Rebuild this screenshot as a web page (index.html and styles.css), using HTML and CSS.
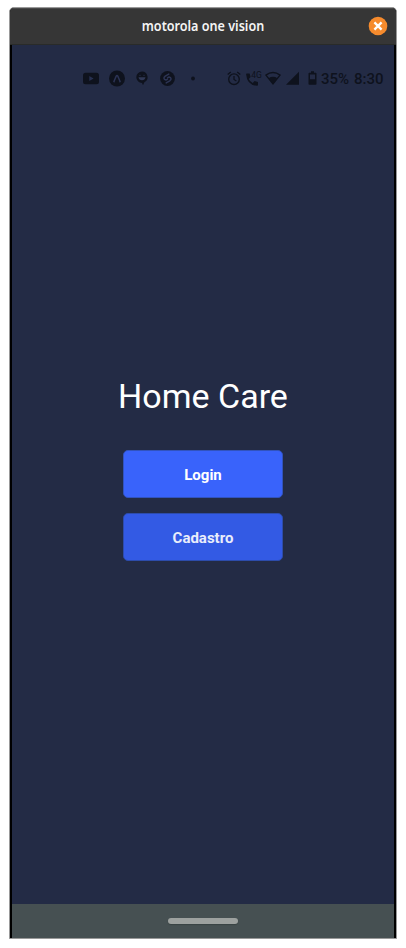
FILE: index.html
```
<!DOCTYPE html>
<html lang="pt-BR">
<head>
<meta charset="utf-8">
<title>motorola one vision</title>
<link rel="stylesheet" href="styles.css">
</head>
<body>
<div class="window">
  <header class="titlebar">
    <span class="title">motorola one vision</span>
    <svg class="close" viewBox="0 0 20 20" role="img" aria-label="Fechar"><circle cx="10" cy="10" r="9.3" fill="#f68b2d"/><path d="M6.4 6.4l7.2 7.2M13.6 6.4l-7.2 7.2" stroke="#fff" stroke-width="2.3"/></svg>
  </header>
  <main class="screen">
    <div class="status">
      <div class="notifications">
        <svg width="16" height="18" viewBox="0 0 16 18"><rect y="2.7" width="16" height="11.5" rx="2.5" fill="currentColor"/><path d="M6.3 6.1l4.3 2.4-4.3 2.4z" fill="#273050"/></svg>
        <svg width="16" height="18" viewBox="0 0 16 18"><circle cx="8" cy="8.5" r="8" fill="currentColor"/><path d="M4.7 12L7.2 6.1q.8-1.2 1.6 0l2.5 5.9M4.9 11.8l.7.4M11.1 11.8l-.7.4" fill="none" stroke="#2b3354" stroke-width="1.5"/></svg>
        <svg width="12" height="18" viewBox="0 0 12 18"><path d="M6 1.5a5.7 5.7 0 0 1 2.4 10.8L7 15.3 6 12.9A5.7 5.7 0 0 1 6 1.5z" fill="currentColor"/><path d="M2.5 7.2h7Q9 10.2 6 10.2T2.5 7.2z" fill="#303855"/><path d="M3 5.6q1-1 2 0M7 5.6q1-1 2 0" fill="none" stroke="#262d48" stroke-width=".6"/></svg>
        <svg width="15" height="18" viewBox="0 0 15 18"><circle cx="7.5" cy="8.5" r="7.4" fill="currentColor"/><path d="M8.8 4.1L5.3 6.2Q3 7.9 4.7 9.5q1.3.9 2.7-.3M6.2 12.9l3.5-2.1Q12 9.1 10.3 7.5q-1.3-.9-2.7.3" fill="none" stroke="#2c3454" stroke-width="1.5" stroke-linecap="round"/></svg>
        <svg width="4" height="18" viewBox="0 0 4 18"><circle cx="2" cy="8.5" r="1.9" fill="currentColor"/></svg>
      </div>
      <div class="system">
        <svg class="alarm" width="14" height="18" viewBox="0 0 14 18"><circle cx="7" cy="9.2" r="5.3" fill="none" stroke="currentColor" stroke-width="1.4"/><path d="M7 6.1v3.4l2.4 1.5M.7 4.6L3.8 2M13.3 4.6L10.2 2" fill="none" stroke="currentColor" stroke-width="1.3"/></svg>
        <svg class="call" width="16" height="18" viewBox="0 0 16 18"><path d="M.8 3.5h2.8l1 3.5-1.9 1.9q1.4 2.7 4 4l1.9-1.9 3.4 1v2.9q0 .8-1 .8Q1 15.5.1 4.3q0-.8.7-.8z" fill="currentColor"/><text x="5.2" y="8.2" class="network">4G</text></svg>
        <svg class="wifi" width="16" height="18" viewBox="0 0 16 18"><path d="M.9 5.1Q8 0 15.1 5.1L8 13.8z" fill="none" stroke="currentColor" stroke-width="1.4"/><path d="M3.5 8.2Q8 5.4 12.5 8.2L8 14.1z" fill="currentColor"/></svg>
        <svg class="signal" width="13" height="18" viewBox="0 0 13 18"><path d="M13 1.7v13.1H0z" fill="currentColor"/></svg>
        <svg class="battery" width="9" height="18" viewBox="0 0 9 18"><path d="M3 1.2h3v1.5h1.7q.8 0 .8.8v10.4q0 .8-.8.8H1.3q-.8 0-.8-.8V3.5q0-.8.8-.8H3z" fill="currentColor"/><path d="M2 4.5h5v4.7H2z" fill="#242b45"/></svg>
        <span class="percent">35%</span>
        <span class="time">8:30</span>
      </div>
    </div>
    <section class="welcome">
      <h1>Home Care</h1>
      <button class="button" type="button">Login</button>
      <button class="button secondary" type="button">Cadastro</button>
    </section>
  </main>
  <footer class="navigation"><div class="handle"></div></footer>
</div>
</body>
</html>
```
FILE: styles.css
```
* { box-sizing: border-box; }
body { margin: 0; padding: 7px 9px 9px; height: 948px; background: #fff; font-family: Roboto, sans-serif; overflow: hidden; }
.window { display: flex; flex-direction: column; width: 388px; height: 932px; border: 1px solid #999; border-radius: 5px 5px 0 0; overflow: hidden; background: #000; }
.titlebar { display: flex; align-items: center; height: 37px; flex: none; padding: 0 8px 1px 28px; background: #363636; border-top: 1px solid #494949; border-bottom: 1px solid #292b29; }
.title { flex: 1; text-align: center; transform: scaleX(.9); color: #f4f4f4; font: 600 14px/20px "Noto Sans", sans-serif; white-space: nowrap; }
.close { width: 20px; height: 20px; flex: none; }
.screen { flex: 1; margin: 0 2px; background: #232b45; }
.status { display: flex; height: 18px; margin: 25px 0 0 71px; color: #0e121d; }
.status svg { display: block; flex: none; }
.notifications { display: flex; width: 144px; }
.notifications svg + svg { margin-left: 9.5px; }
.notifications svg:nth-child(3) { margin-left: 11.5px; }
.notifications svg:nth-child(4) { margin-left: 12px; }
.notifications svg:nth-child(5) { margin-left: 15.5px; }
.system { display: flex; flex: none; }
.call { margin-left: 5px; }
.wifi { margin-left: 3px; }
.signal { margin-left: 5px; }
.battery { margin-left: 9px; }
.network { font: 400 8.5px Roboto, sans-serif; fill: currentColor; }
.percent, .time { font-size: 15px; font-weight: 500; line-height: 18px; }
.percent { margin-left: 4px; width: 33px; }
.welcome { display: flex; flex-direction: column; align-items: center; padding-top: 288px; }
h1 { margin: 0 0 34px; color: #fff; font-size: 34px; font-weight: 400; line-height: 40px; white-space: nowrap; }
.button { width: 160px; height: 48px; margin: 0 0 15px; padding: 1px 0 0; border: 1px solid #3153bd; border-radius: 5px; background: #3963fb; color: #fff; font: 700 15px/20px Roboto, sans-serif; }
.secondary { padding-top: 2px; background: #335ae4; border-color: #2d4cab; color: #e9edfb; }
.navigation { display: flex; justify-content: center; align-items: center; flex: none; height: 34px; margin: 0 2px; background: #465052; }
.handle { width: 70px; height: 6px; border-radius: 3px; background: #9da19f; box-shadow: 0 1px 1px #394344; }
```
